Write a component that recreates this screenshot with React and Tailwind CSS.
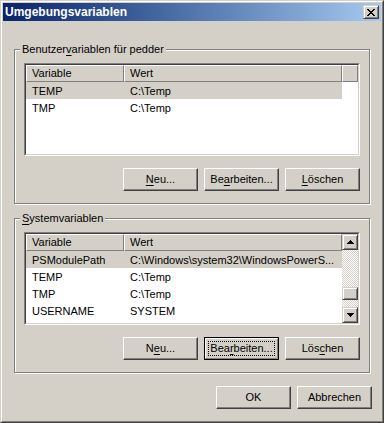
import React from 'react';

const raised =
  'border border-t-white border-l-white border-b-[#404040] border-r-[#404040] shadow-[inset_-1px_-1px_0_#808080]';
const smallRaised =
  'border border-t-[#d4d0c8] border-l-[#d4d0c8] border-b-[#404040] border-r-[#404040] shadow-[inset_1px_1px_0_#ffffff,inset_-1px_-1px_0_#808080] bg-[#d4d0c8]';

const Key = ({ pre, k, post }) => (
  <span>
    {pre}
    <span className="underline underline-offset-2">{k}</span>
    {post}
  </span>
);

const Btn = ({ children, focused }) =>
  focused ? (
    <div className="w-[75px] h-[23px] border border-black">
      <div className="relative h-full border border-t-white border-l-white border-b-[#808080] border-r-[#808080] flex items-center justify-center">
        <span className="absolute inset-[2px] border border-dotted border-black" />
        {children}
      </div>
    </div>
  ) : (
    <div className={`w-[75px] h-[23px] ${raised} flex items-center justify-center`}>{children}</div>
  );

const HeaderCell = ({ className, children }) => (
  <div
    className={`${className} h-full border border-t-white border-l-white border-b-[#808080] border-r-[#808080] bg-[#d4d0c8] flex items-center pl-[5px]`}
  >
    {children}
  </div>
);

const Arrow = ({ down }) => (
  <svg width="7" height="4" viewBox="0 0 7 4" shapeRendering="crispEdges">
    <polygon points={down ? '0,0 7,0 3.5,4' : '3.5,0 7,4 0,4'} fill="#000" />
  </svg>
);

const ScrollBar = () => (
  <div className="w-[16px] h-full flex flex-col shrink-0">
    <div className={`h-[16px] ${smallRaised} flex items-center justify-center`}>
      <Arrow />
    </div>
    <div className="flex-1 flex flex-col bg-[repeating-conic-gradient(#ffffff_0%_25%,#d4d0c8_0%_50%)] bg-[length:2px_2px]">
      <div className="h-[37px]" />
      <div className={`h-[13px] ${smallRaised}`} />
    </div>
    <div className={`h-[16px] ${smallRaised} flex items-center justify-center`}>
      <Arrow down />
    </div>
  </div>
);

const ListView = ({ rows, scroll }) => (
  <div className="w-[336px] h-[93px] border border-t-[#808080] border-l-[#808080] border-b-white border-r-white">
    <div className="h-full border border-t-[#404040] border-l-[#404040] border-b-[#d4d0c8] border-r-[#d4d0c8] bg-white flex overflow-hidden">
      <div className="flex-1 flex flex-col min-w-0">
        <div className="flex h-[17px] shrink-0">
          <HeaderCell className="w-[98px]">Variable</HeaderCell>
          <HeaderCell className="w-[218px]">Wert</HeaderCell>
          {!scroll && <HeaderCell className="flex-1" />}
        </div>
        {rows.map(([name, value], i) => (
          <div key={i} className={`flex w-[316px] h-[17px] shrink-0 items-center pt-px ${i === 0 ? 'bg-[#d4d0c8]' : ''}`}>
            <div className="w-[98px] pl-[6px] whitespace-nowrap overflow-hidden">{name}</div>
            <div className="w-[218px] pl-[6px] whitespace-nowrap overflow-hidden">{value}</div>
          </div>
        ))}
      </div>
      {scroll && <ScrollBar />}
    </div>
  </div>
);

const GroupBox = ({ label, children }) => (
  <div className="relative ml-[11px] w-[356px] h-[155px] border border-[#808080] shadow-[inset_1px_1px_0_#ffffff,1px_1px_0_#ffffff] pt-[13px] pl-[9px] pr-[9px]">
    <div className="absolute left-[5px] top-[-8px] px-[2px] bg-[#d4d0c8] leading-[14px]">{label}</div>
    {children}
  </div>
);

const CloseGlyph = () => (
  <svg width="8" height="7" viewBox="0 0 8 7" shapeRendering="crispEdges">
    {[
      [0, 0, 2], [6, 0, 2], [1, 1, 2], [5, 1, 2], [2, 2, 4], [3, 3, 2], [2, 4, 4], [1, 5, 2], [5, 5, 2], [0, 6, 2], [6, 6, 2],
    ].map(([x, y, w], i) => (
      <rect key={i} x={x} y={y} width={w} height="1" fill="#000" />
    ))}
  </svg>
);

export default function App() {
  return (
    <div className="w-[384px] h-[423px] bg-[#d4d0c8] border border-t-[#d4d0c8] border-l-[#d4d0c8] border-b-[#404040] border-r-[#404040] font-['Liberation_Sans',Tahoma,sans-serif] text-[11px] text-black">
      <div className="h-full border border-t-white border-l-white border-b-[#808080] border-r-[#808080] p-px flex flex-col">
        <div className="h-[18px] shrink-0 bg-linear-to-r from-[#0a246a] to-[#a6caf0] flex items-center justify-between pl-[2px] pr-[2px]">
          <span className="text-white font-bold text-[12px] leading-none">Umgebungsvariablen</span>
          <div className={`w-[16px] h-[14px] ${smallRaised} flex items-center justify-center`}>
            <CloseGlyph />
          </div>
        </div>

        <div className="mt-[28px]">
          <GroupBox label={<Key pre="Benutzer" k="v" post="ariablen für pedder" />}>
            <ListView rows={[['TEMP', 'C:\\Temp'], ['TMP', 'C:\\Temp']]} />
            <div className="flex justify-end gap-[6px] mt-[12px]">
              <Btn><Key pre="" k="N" post="eu..." /></Btn>
              <Btn><Key pre="Be" k="a" post="rbeiten..." /></Btn>
              <Btn><Key pre="" k="L" post="öschen" /></Btn>
            </div>
          </GroupBox>
        </div>

        <div className="mt-[14px]">
          <GroupBox label={<Key pre="" k="S" post="ystemvariablen" />}>
            <ListView
              scroll
              rows={[
                ['PSModulePath', 'C:\\Windows\\system32\\WindowsPowerS...'],
                ['TEMP', 'C:\\Temp'],
                ['TMP', 'C:\\Temp'],
                ['USERNAME', 'SYSTEM'],
                ['windir', 'C:\\Windows'],
              ]}
            />
            <div className="flex justify-end gap-[6px] mt-[12px]">
              <Btn><Key pre="N" k="e" post="u..." /></Btn>
              <Btn focused><Key pre="Bea" k="r" post="beiten..." /></Btn>
              <Btn><Key pre="Lös" k="c" post="hen" /></Btn>
            </div>
          </GroupBox>
        </div>

        <div className="flex justify-end gap-[6px] mt-[13px] pr-[9px]">
          <Btn>OK</Btn>
          <Btn>Abbrechen</Btn>
        </div>
      </div>
    </div>
  );
}
